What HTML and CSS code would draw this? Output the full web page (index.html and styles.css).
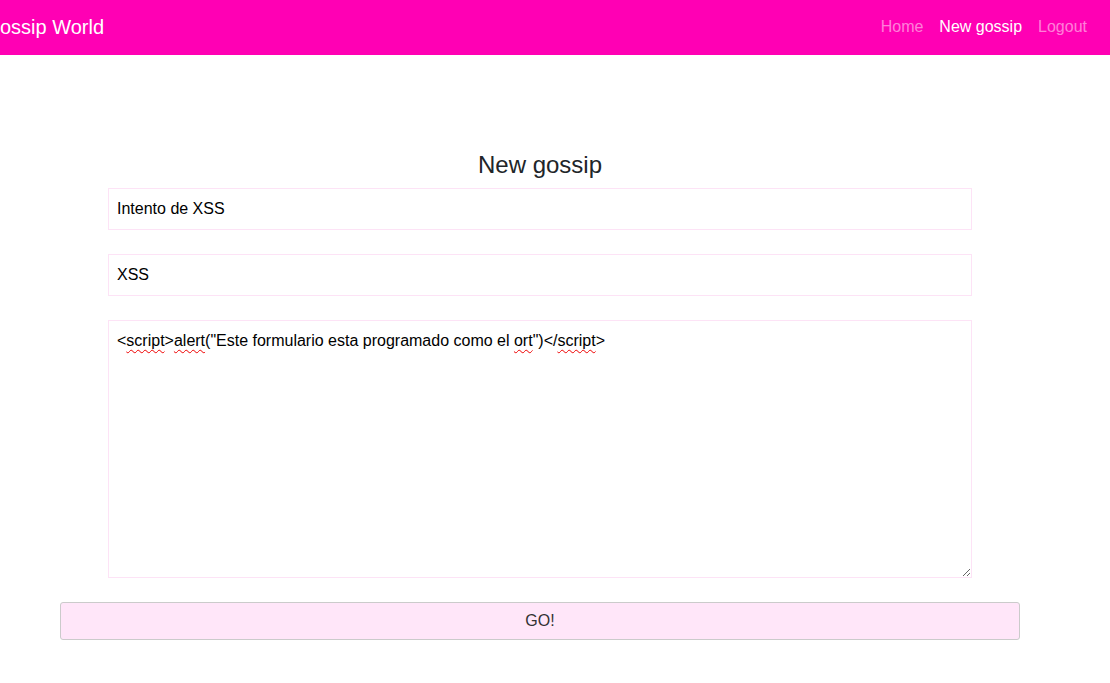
FILE: index.html
```html
<!DOCTYPE html>
<html lang="es">
<head>
<meta charset="utf-8">
<title>Gossip World</title>
<link rel="stylesheet" href="styles.css">
</head>
<body>
<nav class="navbar">
  <a class="brand" href="#">Gossip World</a>
  <ul class="nav-links">
    <li><a class="nav-link muted" href="#">Home</a></li>
    <li><a class="nav-link active" href="#">New gossip</a></li>
    <li><a class="nav-link muted" href="#">Logout</a></li>
  </ul>
</nav>
<main class="container">
  <form class="gossip-form">
    <h4 class="form-title">New gossip</h4>
    <div class="fields">
      <input class="field" type="text" value="Intento de XSS">
      <input class="field" type="text" value="XSS">
      <div class="field textarea"><span class="sp">&lt;<u>script</u>&gt;<u>alert</u>("Este formulario esta programado como el <u>ort</u>")&lt;/<u>script</u>&gt;</span></div>
    </div>
    <button class="go" type="button">GO!</button>
  </form>
</main>
</body>
</html>
```
FILE: styles.css
```css
* { box-sizing: border-box; }
html, body { margin: 0; padding: 0; }
body {
  font-family: "Liberation Sans", Arial, sans-serif;
  font-size: 16px;
  color: #212529;
  background: #fff;
  overflow: hidden;
}
.navbar {
  height: 55px;
  background: #ff00b4;
  display: flex;
  align-items: center;
  justify-content: space-between;
  padding: 0 15px 0 0;
}
.brand {
  margin: 0 0 2px -15.6px;
  font-size: 20px;
  color: #fff;
  text-decoration: none;
  line-height: 1.5;
}
.nav-links {
  list-style: none;
  margin: 0 0 2px;
  padding: 0;
  display: flex;
}
.nav-link {
  display: block;
  padding: 8px;
  line-height: 1.5;
  text-decoration: none;
  font-size: 16px;
}
.nav-link.muted { color: rgba(255,255,255,0.5); }
.nav-link.active { color: #fff; }
.container {
  width: 960px;
  margin-left: 60px;
  padding-top: 96px;
}
.form-title {
  margin: 0 0 8px;
  font-size: 24px;
  font-weight: 400;
  line-height: 1.2;
  text-align: center;
  color: #212529;
}
.fields {
  margin: 0 48px;
  display: flex;
  flex-direction: column;
  gap: 24px;
}
.field {
  display: block;
  width: 100%;
  height: 42px;
  border: 1px solid #fde3f6;
  padding: 8px;
  font-family: "Liberation Sans", Arial, sans-serif;
  font-size: 16px;
  line-height: 24px;
  color: #000;
  background: #fff;
  outline: none;
  margin: 0;
}
.textarea {
  height: 258px;
  resize: vertical;
  overflow: auto;
}
.textarea u {
  text-decoration: underline wavy #e00;
  text-decoration-skip-ink: none;
  text-decoration-thickness: 1px;
  text-underline-offset: 3px;
}
.go {
  display: block;
  width: 100%;
  height: 38px;
  margin-top: 24px;
  background: #ffe6f9;
  border: 1px solid #cbcbcb;
  border-radius: 3px;
  font-family: "Liberation Sans", Arial, sans-serif;
  font-size: 16px;
  color: #333;
}
```
